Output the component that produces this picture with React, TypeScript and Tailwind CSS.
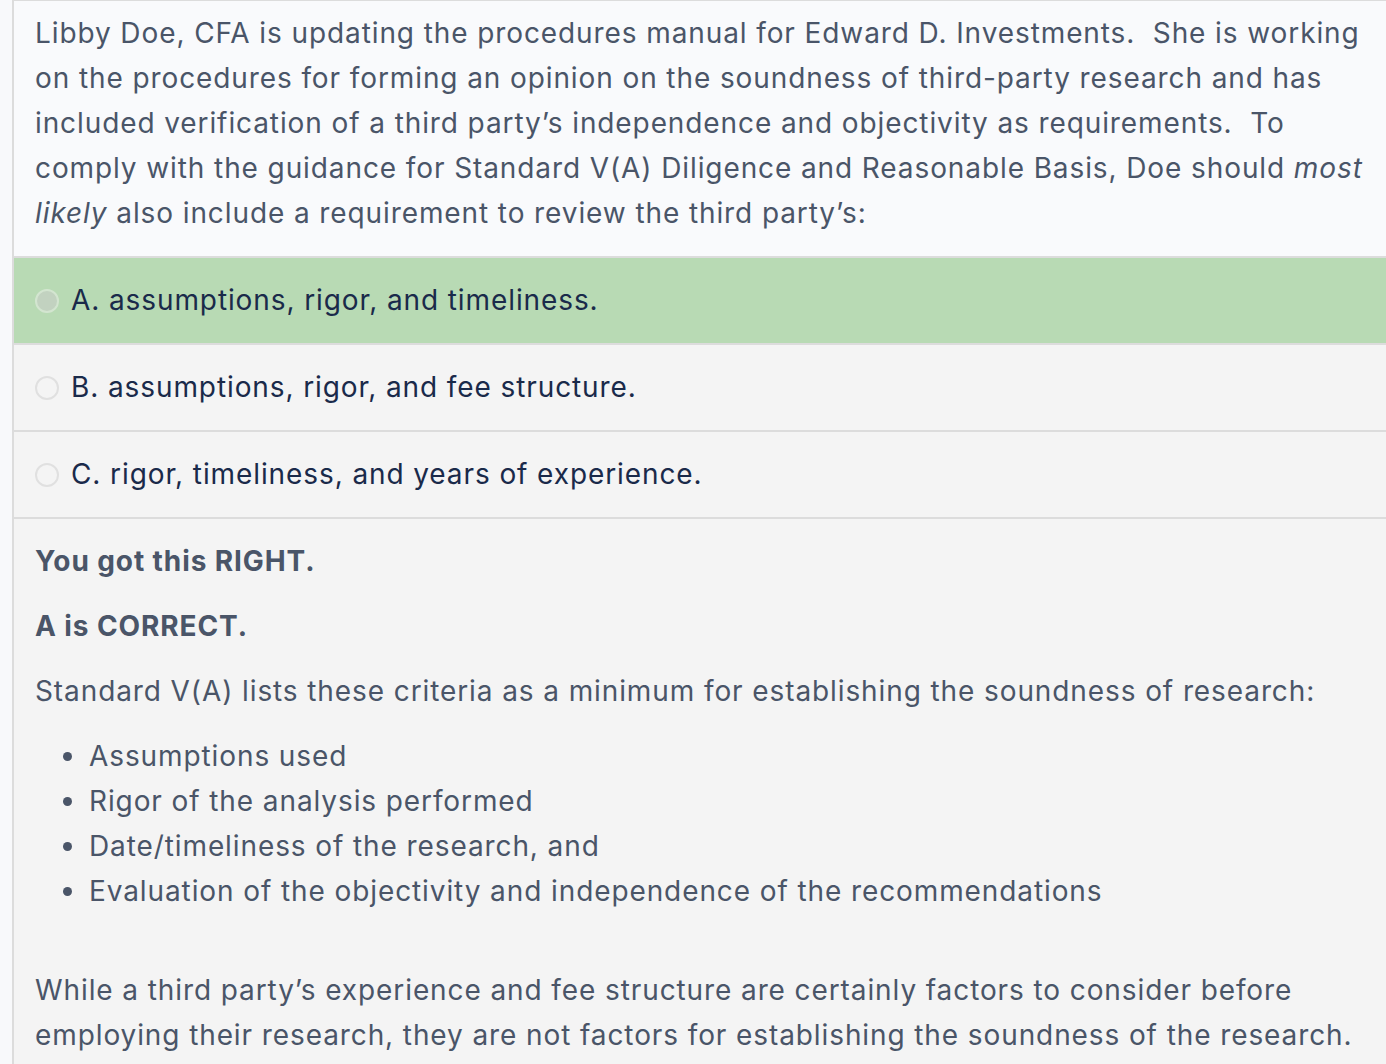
import React from 'react';

const options = [
  { key: 'A', text: 'assumptions, rigor, and timeliness.', selected: true },
  { key: 'B', text: 'assumptions, rigor, and fee structure.', selected: false },
  { key: 'C', text: 'rigor, timeliness, and years of experience.', selected: false },
];

const bullets = [
  'Assumptions used',
  'Rigor of the analysis performed',
  'Date/timeliness of the research, and',
  'Evaluation of the objectivity and independence of the recommendations',
];

const Radio: React.FC<{ checked: boolean }> = ({ checked }) => (
  <span
    className={
      checked
        ? 'inline-block w-[24px] h-[24px] rounded-full border-2 border-[#d3e5d0] bg-[#c2d2c0] shrink-0'
        : 'inline-block w-[24px] h-[24px] rounded-full border-2 border-[#e0e0e0] shrink-0'
    }
  />
);

export default function App() {
  return (
    <div
      className="min-h-[1064px] bg-[#f8f9fb] pl-[12px] overflow-hidden text-[28px] leading-[45px] tracking-[0.9px]"
      style={{ fontFamily: 'Inter, "Noto Sans", sans-serif' }}
    >
      <div className="border-l-2 border-[#dcdcdc] w-[1380px]">
        {/* question */}
        <div className="bg-[#f9fafc] border-t border-[#dcdcdc] pl-[21px] pr-[20px] pt-[10px] pb-[20px] text-[#4a5568]">
          <p>
            Libby Doe, CFA is updating the procedures manual for Edward D. Investments.{'\u00a0 '}She is working
            on the procedures for forming an opinion on the soundness of third-party research and has included
            verification of a third party’s independence and objectivity as requirements.{'\u00a0 '}To comply with
            the guidance for Standard V(A) Diligence and Reasonable Basis, Doe should <em>most likely</em> also
            include a requirement to review the third party’s:
          </p>
        </div>

        {/* options */}
        {options.map((o) => (
          <div
            key={o.key}
            className={
              'flex items-center gap-[12px] h-[87px] pl-[21px] border-t-2 border-[#dcdcdc] text-[#1a2a4a] ' +
              (o.selected ? 'bg-[#b8dab4]' : 'bg-[#f4f4f4]')
            }
          >
            <Radio checked={o.selected} />
            <span>
              {o.key}. {o.text}
            </span>
          </div>
        ))}

        {/* feedback */}
        <div className="bg-[#f4f4f4] border-t-2 border-[#dcdcdc] pl-[21px] pt-[20px] pb-[20px] text-[#4a5568]">
          <p className="font-bold">You got this RIGHT.</p>
          <p className="font-bold mt-[20px]">A is CORRECT.</p>
          <p className="mt-[20px]">Standard V(A) lists these criteria as a minimum for establishing the soundness of research:</p>
          <ul className="mt-[20px]">
            {bullets.map((b) => (
              <li key={b} className="flex items-center">
                <span className="w-[9px] h-[9px] rounded-full bg-[#4a5568] ml-[28px] mr-[17px] shrink-0" />
                <span>{b}</span>
              </li>
            ))}
          </ul>
          <p className="mt-[54px] pr-[20px]">
            While a third party’s experience and fee structure are certainly factors to consider before employing
            their research, they are not factors for establishing the soundness of the research.
          </p>
        </div>
      </div>
    </div>
  );
}
